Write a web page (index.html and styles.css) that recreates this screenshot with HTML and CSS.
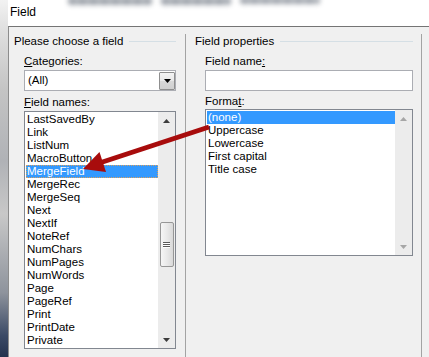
FILE: index.html
```html
<!DOCTYPE html>
<html>
<head>
<meta charset="utf-8">
<link rel="stylesheet" href="styles.css">
</head>
<body>
<div class="screen">
  <div class="edge"></div>
  <div class="window">
    <div class="titlebar">
      <div class="ghost"><i class="blob b1"></i><i class="blob b2"></i><i class="blob b3"></i></div>
      <span class="title">Field</span>
    </div>
    <div class="content">
      <section class="panel left">
        <div class="group-head"><span>Please choose a field</span><i class="rule"></i></div>
        <div class="label"><u>C</u>ategories:</div>
        <div class="combo">
          <span class="combo-text">(All)</span>
          <span class="combo-btn"><svg width="7" height="4" viewBox="0 0 7 4"><path d="M0 0H7L3.5 4Z" fill="#000"/></svg></span>
        </div>
        <div class="label label-names"><u>F</u>ield names:</div>
        <div class="listbox names">
          <ul class="items">
            <li>LastSavedBy</li>
            <li>Link</li>
            <li>ListNum</li>
            <li>MacroButton</li>
            <li class="sel focus">MergeField</li>
            <li>MergeRec</li>
            <li>MergeSeq</li>
            <li>Next</li>
            <li>NextIf</li>
            <li>NoteRef</li>
            <li>NumChars</li>
            <li>NumPages</li>
            <li>NumWords</li>
            <li>Page</li>
            <li>PageRef</li>
            <li>Print</li>
            <li>PrintDate</li>
            <li>Private</li>
          </ul>
          <div class="vscroll">
            <span class="sb-btn"><svg width="7" height="4" viewBox="0 0 7 4"><path d="M3.5 0L7 4H0Z" fill="#3c3c3c"/></svg></span>
            <div class="track names-track"><div class="thumb"><i></i><i></i><i></i></div></div>
            <span class="sb-btn"><svg width="7" height="4" viewBox="0 0 7 4"><path d="M0 0H7L3.5 4Z" fill="#3c3c3c"/></svg></span>
          </div>
        </div>
      </section>
      <section class="panel right">
        <div class="group-head"><span>Field properties</span><i class="rule"></i></div>
        <div class="label">Field name<u>:</u></div>
        <div class="textbox"></div>
        <div class="label label-format">Forma<u>t</u>:</div>
        <div class="listbox formats">
          <ul class="items">
            <li class="sel">(none)</li>
            <li>Uppercase</li>
            <li>Lowercase</li>
            <li>First capital</li>
            <li>Title case</li>
          </ul>
          <div class="vscroll disabled">
            <span class="sb-btn"><svg width="7" height="4" viewBox="0 0 7 4"><path d="M3.5 0L7 4H0Z" fill="#a6a6a6"/></svg></span>
            <div class="track"></div>
            <span class="sb-btn"><svg width="7" height="4" viewBox="0 0 7 4"><path d="M0 0H7L3.5 4Z" fill="#a6a6a6"/></svg></span>
          </div>
        </div>
      </section>
    </div>
  </div>
  <svg class="pointer" width="429" height="357" viewBox="0 0 429 357">
    <line x1="209" y1="127" x2="101" y2="162.5" stroke="#a80c0c" stroke-width="5"/>
    <polygon points="83,169 99.5,152 106,172" fill="#a80c0c"/>
  </svg>
</div>
</body>
</html>
```
FILE: styles.css
```css
* { box-sizing: border-box; }
html, body { margin: 0; padding: 0; }
body {
  width: 429px;
  height: 357px;
  overflow: hidden;
  background: #fff;
  font-family: "Liberation Sans", Arial, sans-serif;
  font-size: 11.5px;
  color: #000;
}
.screen {
  position: relative;
  display: flex;
  width: 429px;
  height: 357px;
}
.edge {
  width: 8px;
  flex: none;
  background: linear-gradient(to bottom, #f2f2f2 0, #e0e0e0 8%, #c4c4c4 25%, #b0b2b6 45%, #c8c8c8 60%, #8e939c 82%, #3b4a66 94%, #24324e 100%);
}
.window {
  flex: 1;
  display: flex;
  flex-direction: column;
}
.titlebar {
  position: relative;
  height: 26px;
  flex: none;
  background: #fff;
  overflow: hidden;
}
.ghost {
  position: absolute;
  left: 60px;
  top: -3px;
  display: flex;
  gap: 9px;
  filter: blur(2.4px);
  opacity: 0.6;
}
.blob {
  display: block;
  height: 8px;
  border-radius: 3px;
  background: repeating-linear-gradient(to right, #5e6774 0, #5e6774 7px, #9aa0a8 9px, #5e6774 11px);
}
.b1 { width: 84px; }
.b2 { width: 70px; }
.b3 { width: 80px; height: 7px; }
.title {
  display: block;
  position: relative;
  padding-left: 2px;
  line-height: 24px;
  font-size: 12px;
}
.content {
  flex: 1;
  display: flex;
  background: #f0f0f0;
  border-top: 1px solid #747474;
  border-left: 1px solid #8c8c8c;
}
.panel { display: flex; flex-direction: column; }
.panel.left {
  width: 176px;
  padding: 7px 9px 0 15px;
}
.panel.right {
  width: 237px;
  margin-top: 7px;
  padding: 0 8px 0 19px;
  border-left: 1px solid #a3a3a3;
  border-right: 1px solid #a3a3a3;
}
.group-head {
  display: flex;
  align-items: center;
  height: 15px;
  line-height: 15px;
  margin-left: -10px;
  white-space: nowrap;
}
.rule {
  flex: 1;
  height: 1px;
  margin-left: 6px;
  background: #d5dfe5;
}
.label {
  line-height: 15px;
  height: 15px;
  margin-top: 5px;
  white-space: nowrap;
}
.label-names { margin-top: 4px; }
.label-format { margin-top: 3px; }
.combo {
  margin-top: 1px;
  height: 21px;
  display: flex;
  background: #fff;
  border: 1px solid #abadb3;
}
.combo-text {
  flex: 1;
  padding-left: 3px;
  line-height: 19px;
}
.combo-btn {
  width: 16px;
  height: 18px;
  margin-top: 1px;
  border: 1px solid #8f8f8f;
  border-radius: 1px;
  background: linear-gradient(to bottom, #f4f4f4 0, #e8e8e8 50%, #d8d8d8 51%, #cfcfcf 100%);
  display: flex;
  align-items: center;
  justify-content: center;
}
.textbox {
  margin-top: 1px;
  height: 21px;
  background: #fff;
  border: 1px solid #abadb3;
}
.listbox {
  display: flex;
  background: #fff;
  border: 1px solid #828790;
  padding: 1px 0 1px 1px;
}
.listbox.names { margin-top: 1px; height: 238px; }
.listbox.formats { margin-top: 0; height: 147px; }
.items {
  list-style: none;
  margin: 0;
  padding: 0;
  flex: 1;
  min-width: 0;
}
.items li {
  height: 13px;
  line-height: 13px;
  padding-left: 1px;
  white-space: nowrap;
}
.items li.sel {
  background: #3399ff;
  color: #fff;
}
.items li.focus {
  outline: 1px dotted #d9a060;
  outline-offset: -1px;
}
.vscroll {
  width: 17px;
  flex: none;
  display: flex;
  flex-direction: column;
  background: #ececec;
  margin-top: -1px;
  margin-bottom: -1px;
}
.sb-btn {
  height: 17px;
  flex: none;
  display: flex;
  align-items: center;
  justify-content: center;
}
.track {
  flex: 1;
  display: flex;
  flex-direction: column;
  align-items: center;
}
.names-track { padding-top: 93px; }
.thumb {
  width: 14px;
  height: 45px;
  border: 1px solid #979797;
  border-radius: 2px;
  background: linear-gradient(to right, #f6f6f6 0, #e9e9e9 50%, #d9d9d9 100%);
  display: flex;
  flex-direction: column;
  align-items: center;
  justify-content: center;
  gap: 1px;
}
.thumb i {
  display: block;
  width: 7px;
  height: 1px;
  background: #5a5a5a;
  box-shadow: 0 1px 0 #fff;
}
.pointer {
  position: absolute;
  left: 0;
  top: 0;
  pointer-events: none;
}
```
